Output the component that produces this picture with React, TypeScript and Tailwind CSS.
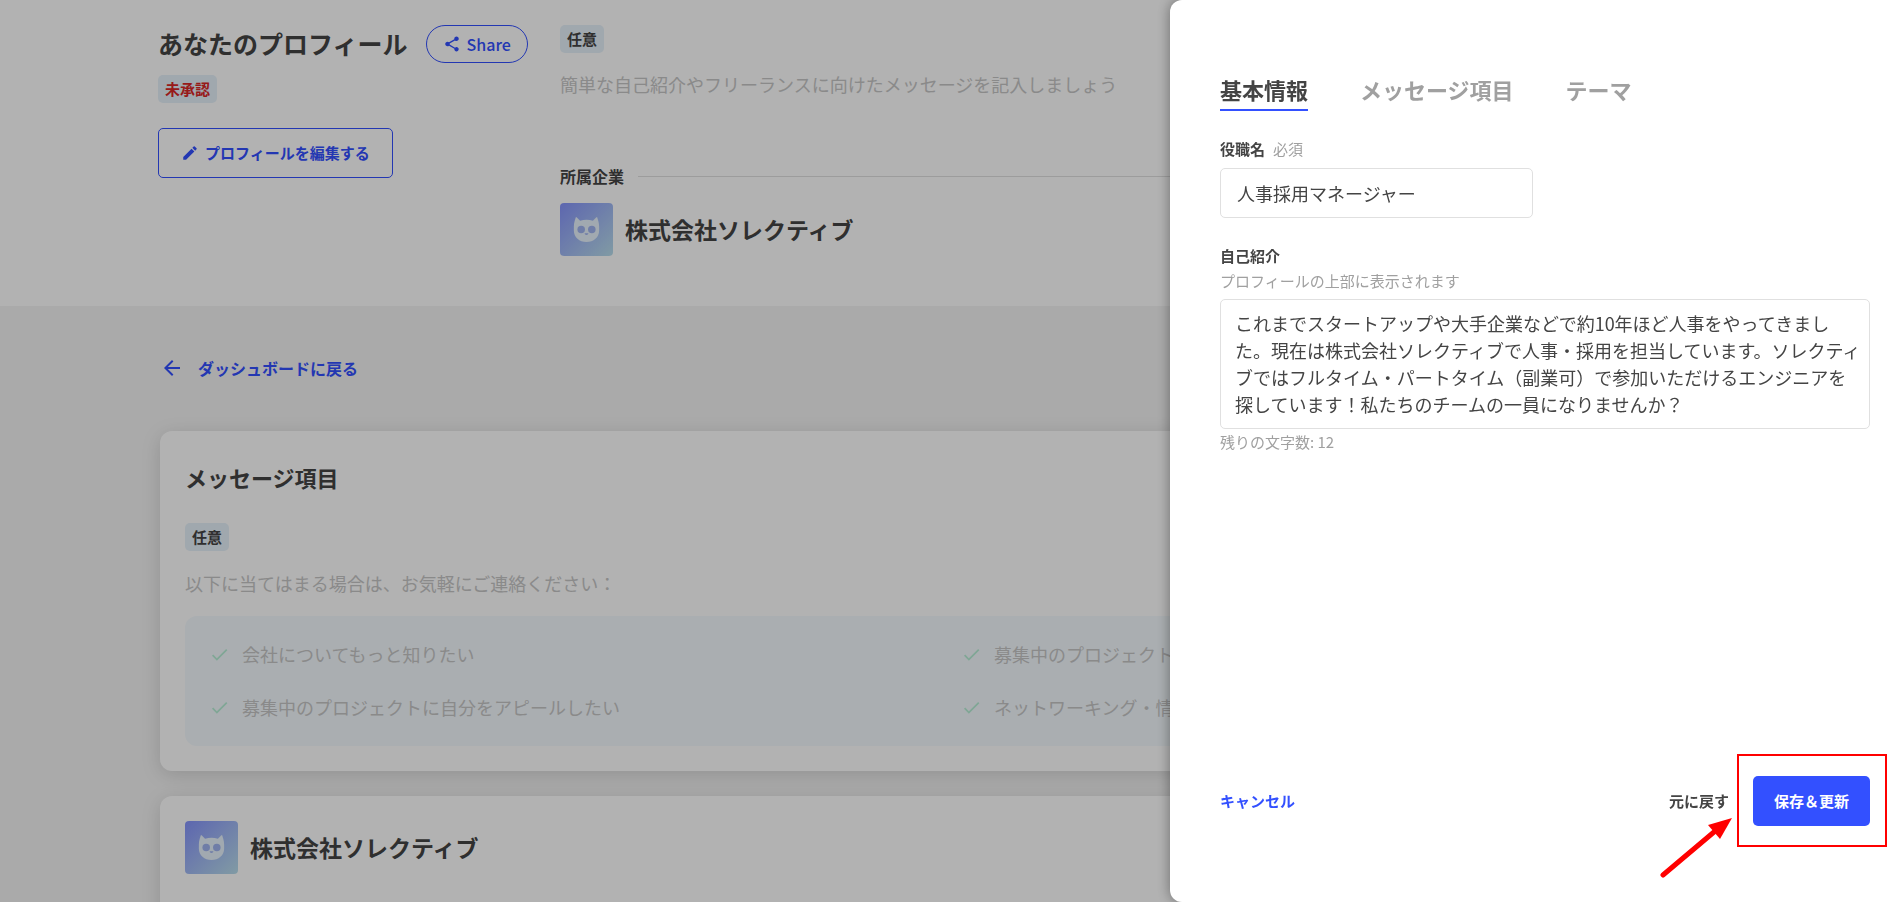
import React, { useState } from 'react';
import { MdArrowBack, MdCheck, MdEdit, MdShare } from 'react-icons/md';

const TABS = ['基本情報', 'メッセージ項目', 'テーマ'];

const MESSAGES = [
  '会社についてもっと知りたい',
  '募集中のプロジェクトについて知りたい',
  '募集中のプロジェクトに自分をアピールしたい',
  'ネットワーキング・情報交換したい',
];

const INTRO = [
  'これまでスタートアップや大手企業などで約10年ほど人事をやってきまし',
  'た。現在は株式会社ソレクティブで人事・採用を担当しています。ソレクティ',
  'ブではフルタイム・パートタイム（副業可）で参加いただけるエンジニアを',
  '探しています！私たちのチームの一員になりませんか？',
].join('\n');

const MAX_INTRO = 140;

interface BadgeProps {
  children: React.ReactNode;
  danger?: boolean;
}

const Badge: React.FC<BadgeProps> = ({ children, danger }) => (
  <span
    className={`h-7 rounded-[5px] bg-[#e5f1fa] px-[7px] text-[15px] leading-7 font-bold ${
      danger ? 'text-[#d92626]' : 'text-[#444]'
    }`}
  >
    {children}
  </span>
);

const CompanyLogo: React.FC<{ id: string }> = ({ id }) => (
  <svg viewBox="0 0 52 52" className="h-[53px] w-[53px] shrink-0" aria-hidden="true">
    <defs>
      <linearGradient id={id} x1="0" y1="0" x2="1" y2="1">
        <stop offset="0" stopColor="#8593fc" />
        <stop offset="0.5" stopColor="#a0b8f4" />
        <stop offset="1" stopColor="#b9deeb" />
      </linearGradient>
    </defs>
    <rect width="52" height="52" rx="4" fill={`url(#${id})`} />
    <path
      d="M15.4 14.3c.4-.4 1-.3 1.4.2l2.9 2.8c4-1.2 8.6-1.2 12.6 0l2.9-2.8c.4-.5 1-.6 1.4-.2.3 1.5 1.8 5 1.8 8.7v4.2c0 6.4-5.4 11-12.4 11s-12.4-4.6-12.4-11V23c0-3.7 1.5-7.2 1.8-8.7z"
      fill="#e7f2fc"
    />
    <circle cx="20.8" cy="26" r="3.7" fill="#9fb4f0" />
    <circle cx="31.2" cy="26" r="3.7" fill="#9fb4f0" />
    <path d="M24.2 29.8h3.6c0 1-.8 1.6-1.8 1.6s-1.8-.6-1.8-1.6z" fill="#9fb4f0" />
  </svg>
);

const ProfileHeader: React.FC = () => (
  <header className="bg-white">
    <div className="mx-auto flex max-w-[1582px] pt-[25px] pb-[50px]">
      <div className="w-[402px] shrink-0">
        <div className="flex items-center gap-[18px]">
          <h1 className="pb-0.5 text-[25px] leading-9 font-bold">あなたのプロフィール</h1>
          <button className="flex h-[38px] items-center gap-1.5 rounded-full border border-[#3350ff] px-4 text-base font-medium text-[#3350ff]">
            <MdShare size={18} />
            Share
          </button>
        </div>
        <div className="mt-3 flex">
          <Badge danger>未承認</Badge>
        </div>
        <button className="mt-[25px] flex h-[50px] items-center gap-1.5 rounded-[5px] border border-[#3350ff] px-[22px] text-[15px] font-bold text-[#3350ff]">
          <MdEdit size={18} />
          プロフィールを編集する
        </button>
      </div>

      <div className="min-w-0 flex-1">
        <div className="flex">
          <Badge>任意</Badge>
        </div>
        <p className="mt-[17px] text-lg leading-7 text-[#c6c6c6]">
          簡単な自己紹介やフリーランスに向けたメッセージを記入しましょう
        </p>
        <div className="mt-16 flex items-center gap-3.5">
          <h2 className="text-base leading-7 font-bold">所属企業</h2>
          <hr className="flex-1 border-[#e0e0e0]" />
        </div>
        <div className="mt-[13px] flex items-center gap-3">
          <CompanyLogo id="logo-header" />
          <p className="pb-0.5 text-[23px] leading-8 font-bold">株式会社ソレクティブ</p>
        </div>
      </div>
    </div>
  </header>
);

const ProfileBody: React.FC = () => (
  <main className="mx-auto max-w-[1578px] pt-12">
    <a href="#dashboard" className="flex w-fit items-center gap-3.5 text-base leading-7 font-bold text-[#3350ff]">
      <MdArrowBack size={24} />
      ダッシュボードに戻る
    </a>

    <section className="mt-[49px] rounded-xl bg-white p-[25px] shadow-[0_4px_20px_rgba(0,0,0,0.14)]">
      <h2 className="mt-[5px] text-[22px] leading-8 font-bold">メッセージ項目</h2>
      <div className="mt-[30px] flex">
        <Badge>任意</Badge>
      </div>
      <p className="mt-[18px] text-lg leading-7 text-[#c6c6c6]">以下に当てはまる場合は、お気軽にご連絡ください：</p>
      <ul className="mt-[19px] grid grid-cols-2 gap-x-6 gap-y-[25px] rounded-xl bg-[#f4fafe] px-6 pt-6 pb-[25px]">
        {MESSAGES.map((message) => (
          <li key={message} className="flex items-center gap-3 text-lg leading-7 text-[#c6c6c6]">
            <MdCheck size={21} className="text-[#b8eed6]" />
            {message}
          </li>
        ))}
      </ul>
    </section>

    <section className="mt-[25px] flex items-center gap-3 rounded-t-xl bg-white px-[25px] pt-[25px] pb-28 shadow-[0_4px_20px_rgba(0,0,0,0.14)]">
      <CompanyLogo id="logo-card" />
      <p className="pb-0.5 text-[23px] leading-8 font-bold">株式会社ソレクティブ</p>
    </section>
  </main>
);

const EditDrawer: React.FC = () => {
  const [tab, setTab] = useState(TABS[0]);
  const [position, setPosition] = useState('人事採用マネージャー');
  const [intro, setIntro] = useState(INTRO);

  // line breaks do not count towards the limit
  const remaining = MAX_INTRO - intro.replace(/\n/g, '').length;

  return (
    <aside className="fixed inset-y-0 right-0 flex w-[728px] max-w-full flex-col rounded-l-xl bg-white pt-[72px] pr-7 pb-[76px] pl-[50px] shadow-[0_0_14px_rgba(0,0,0,0.4)]">
      <nav className="flex gap-13">
        {TABS.map((name) => (
          <button
            key={name}
            onClick={() => setTab(name)}
            className={`h-[39px] border-b-2 pb-1 text-[22px] leading-8 font-bold ${
              tab === name ? 'border-[#3350ff] text-[#444]' : 'border-transparent text-[#a0a0a0]'
            }`}
          >
            {name}
          </button>
        ))}
      </nav>

      <label htmlFor="position" className="mt-[26px] text-[15px] leading-6 font-bold">
        役職名<span className="ml-2 font-normal text-[#a0a0a0]">必須</span>
      </label>
      <input
        id="position"
        value={position}
        onChange={(e) => setPosition(e.target.value)}
        className="mt-[7px] h-[50px] w-[313px] rounded-[5px] border border-[#e0e0e0] px-4 text-lg outline-none"
      />

      <label htmlFor="intro" className="mt-[26px] text-[15px] leading-6 font-bold">
        自己紹介
      </label>
      <p className="mt-px text-[15px] leading-6 text-[#a0a0a0]">プロフィールの上部に表示されます</p>
      <textarea
        id="intro"
        value={intro}
        onChange={(e) => setIntro(e.target.value)}
        className="mt-1.5 h-[130px] w-full shrink-0 resize-none overflow-hidden rounded-[5px] border border-[#e0e0e0] py-2.5 pr-0.5 pl-3.5 text-lg leading-[27px] outline-none"
      />
      <p className="mt-px text-[15px] leading-6 text-[#a0a0a0]">残りの文字数: {remaining}</p>

      <div className="mt-auto flex items-center text-[15px] font-bold">
        <button className="text-[#3350ff]">キャンセル</button>
        <button className="ml-auto">元に戻す</button>
        <div className="relative ml-6">
          <button className="h-[50px] rounded-[5px] bg-[#3350ff] px-[21px] text-white">保存＆更新</button>
          <div className="pointer-events-none absolute -top-[22px] -right-[17px] -bottom-[21px] -left-4 border-2 border-[#ff0000]" />
          <svg
            viewBox="0 0 76 62"
            className="pointer-events-none absolute top-10 right-[136px] h-[62px] w-[76px]"
            aria-hidden="true"
          >
            <path d="M5 59 56 16" stroke="#ff0000" strokeWidth="5" strokeLinecap="round" />
            <path d="M74 2 50 9 62 23z" fill="#ff0000" />
          </svg>
        </div>
      </div>
    </aside>
  );
};

const App: React.FC = () => {
  return (
    <div
      lang="ja"
      className="h-screen overflow-hidden bg-[#f4f4f4] font-['Noto_Sans_CJK_JP',sans-serif] text-[#444]"
    >
      <ProfileHeader />
      <ProfileBody />
      <div className="fixed inset-0 bg-black/30" />
      <EditDrawer />
    </div>
  );
};

export default App;
